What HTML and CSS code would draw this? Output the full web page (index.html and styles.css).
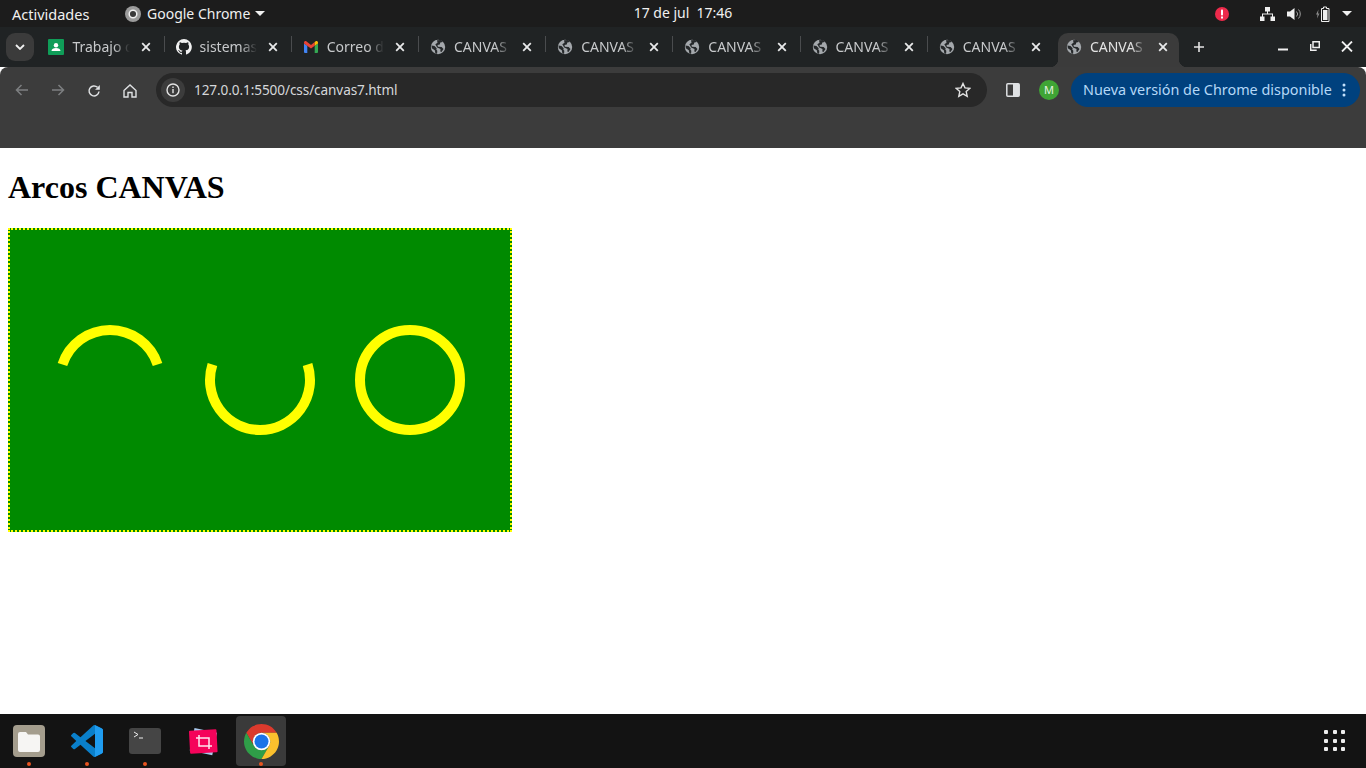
FILE: index.html
```html
<!DOCTYPE html>
<html lang="es">
<head>
    <meta charset="UTF-8">
    <title>Arcos CANVAS</title>
    <link rel="stylesheet" href="styles.css">
</head>
<body>
    <svg class="defs" width="0" height="0">
        <symbol id="globe" viewBox="0 0 16 16">
            <circle cx="8" cy="8" r="7.200" fill="#a4a8ac"/>
            <path d="M1.500 6.500l3 .5 2.200 2.200-.4 1.300 1 1.200-.2 3-1.700-.3-.6-3.200-3-2zM7 1.200l4-.1 1.800 1.900-2.500.6-.5 1.800-2.300.7.400 1.600 3.700.3 1.900 1.900-2 3-1.200-.3.200-2.700-3.300-1.500-1.900-3.200 2.200-1.500z" fill="#26292b"/>
        </symbol>
        <symbol id="close" viewBox="0 0 10 10">
            <path d="M1.200 1.200l7.600 7.600M8.800 1.200l-7.600 7.600" stroke="#e8e9ea" stroke-width="1.800" fill="none"/>
        </symbol>
    </svg>

    <!-- barra de gnome -->
    <header class="topbar">
        <div class="topbar-left">
            <span class="activities">Actividades</span>
            <span class="app-menu">
                <svg class="app-icon" width="16" height="16" viewBox="0 0 16 16"><circle cx="8" cy="8" r="8" fill="#9b9b9b"/><circle cx="8" cy="8" r="3.800" fill="#3a3a3a" stroke="#f0f0f0" stroke-width="1.500"/></svg>
                Google Chrome
                <svg class="caret" width="10" height="5" viewBox="0 0 10 5"><path d="M0 0h10L5 5z" fill="#f0f0f0"/></svg>
            </span>
        </div>
        <div class="clock">17 de jul&nbsp; 17:46</div>
        <div class="topbar-right">
            <svg class="alert" width="14" height="14" viewBox="0 0 14 14"><circle cx="7" cy="7" r="7" fill="#ed2a4b"/><rect x="6" y="2.500" width="2" height="6" rx=".8" fill="#fff"/><rect x="6" y="9.500" width="2" height="2" fill="#fff"/></svg>
            <svg class="net" width="15" height="14" viewBox="0 0 15 14"><path d="M5 0h5v4.500H8V6.500h5V9.500h2V14h-4.500V9.500h1.500V7.500H3V9.500h1.500V14H0V9.500h2V6.500h5V4.500H5z" fill="#f0f0f0"/></svg>
            <svg class="vol" width="15" height="14" viewBox="0 0 15 14"><path d="M0 4.500h3L7.500 1v12L3 9.500H0z" fill="#f0f0f0"/><path d="M9.500 4.500a3.500 3.500 0 0 1 0 5M11.500 2.500a6.500 6.500 0 0 1 0 9" stroke="#9c9c9c" fill="none"/></svg>
            <svg class="batt" width="15" height="16" viewBox="0 0 15 16"><path d="M2.500 3.500L0 8.500h1.500L1 12.500 3.500 7.500H2z" fill="#8c8c8c"/><path d="M7.500 2.500v-1.500h3v1.500h2.500v13H5.500v-13z" fill="none" stroke="#f0f0f0"/><rect x="7" y="4" width="4.500" height="10" fill="#f0f0f0"/></svg>
            <svg class="caret" width="10" height="5" viewBox="0 0 10 5"><path d="M0 0h10L5 5z" fill="#f0f0f0"/></svg>
        </div>
    </header>

    <!-- pestañas -->
    <div class="tabstrip">
        <button class="tab-search"><svg width="10" height="6" viewBox="0 0 10 6"><path d="M1 1l4 4 4-4" stroke="#f0f0f0" stroke-width="1.800" fill="none"/></svg></button>
        <div class="tabs">
            <div class="tab">
                <svg class="favicon" viewBox="0 0 16 16"><rect width="16" height="16" rx="1" fill="#0f9d58"/><circle cx="8" cy="6.300" r="2.200" fill="#fff"/><path d="M3.500 12c0-2 2-3 4.500-3s4.500 1 4.500 3z" fill="#fff"/></svg>
                <span class="tab-title">Trabajo d</span>
                <svg class="tab-close"><use href="#close"/></svg>
            </div>
            <div class="tab">
                <svg class="favicon" viewBox="0 0 16 16"><path d="M8 0a8 8 0 0 0-2.500 15.600c.4.100.5-.2.500-.4v-1.400c-2.200.5-2.700-1-2.700-1-.4-.9-.9-1.200-.9-1.200-.7-.5.100-.5.100-.5.800.1 1.200.8 1.200.8.700 1.200 1.900.9 2.300.7.100-.5.300-.9.500-1.100-1.800-.2-3.600-.9-3.600-4 0-.9.300-1.600.8-2.100-.1-.2-.4-1 .1-2.100 0 0 .7-.2 2.200.8a7.600 7.600 0 0 1 4 0c1.500-1 2.200-.8 2.200-.8.400 1.100.2 1.900.1 2.100.5.600.8 1.300.8 2.100 0 3.100-1.900 3.700-3.600 3.900.3.200.5.700.5 1.500v2.200c0 .2.100.5.600.4A8 8 0 0 0 8 0z" fill="#f1f1f1"/></svg>
                <span class="tab-title">sistemas</span>
                <svg class="tab-close"><use href="#close"/></svg>
            </div>
            <div class="tab">
                <svg class="favicon gmail" viewBox="0 0 14 12">
                    <path d="M0 2.500V11a1 1 0 0 0 1 1h2.300V4.800z" fill="#4285f4"/>
                    <path d="M14 2.500V11a1 1 0 0 1-1 1h-2.300V4.800z" fill="#34a853"/>
                    <path d="M0 1.500C0 .3 1.400-.4 2.300.3L7 3.900 10.700 1v3.800L7 7.600 0 2.500z" fill="#ea4335"/>
                    <path d="M10.700 1l1-.7c.9-.7 2.300 0 2.300 1.200v1l-3.300 2.300z" fill="#fbbc04"/>
                </svg>
                <span class="tab-title">Correo d</span>
                <svg class="tab-close"><use href="#close"/></svg>
            </div>
            <div class="tab">
                <svg class="favicon"><use href="#globe"/></svg>
                <span class="tab-title">CANVAS</span>
                <svg class="tab-close"><use href="#close"/></svg>
            </div>
            <div class="tab">
                <svg class="favicon"><use href="#globe"/></svg>
                <span class="tab-title">CANVAS</span>
                <svg class="tab-close"><use href="#close"/></svg>
            </div>
            <div class="tab">
                <svg class="favicon"><use href="#globe"/></svg>
                <span class="tab-title">CANVAS</span>
                <svg class="tab-close"><use href="#close"/></svg>
            </div>
            <div class="tab">
                <svg class="favicon"><use href="#globe"/></svg>
                <span class="tab-title">CANVAS</span>
                <svg class="tab-close"><use href="#close"/></svg>
            </div>
            <div class="tab no-sep">
                <svg class="favicon"><use href="#globe"/></svg>
                <span class="tab-title">CANVAS</span>
                <svg class="tab-close"><use href="#close"/></svg>
            </div>
            <div class="tab active">
                <svg class="favicon"><use href="#globe"/></svg>
                <span class="tab-title">CANVAS</span>
                <svg class="tab-close"><use href="#close"/></svg>
            </div>
        </div>
        <svg class="new-tab" width="12" height="12" viewBox="0 0 12 12"><path d="M6 1v10M1 6h10" stroke="#e3e3e3" stroke-width="1.600"/></svg>
        <div class="window-controls">
            <svg class="win-min" width="10" height="10" viewBox="0 0 10 10"><rect y="7.500" width="10" height="2" fill="#f0f0f0"/></svg>
            <svg width="10" height="10" viewBox="0 0 10 10"><path d="M3 .7h6.300V6.500H3zM.7 3v6.300h6" fill="none" stroke="#f0f0f0" stroke-width="1.500"/></svg>
            <svg width="12" height="11" viewBox="0 0 12 11"><path d="M1 .5l10 10M11 .5L1 10.500" stroke="#f0f0f0" stroke-width="1.800"/></svg>
        </div>
    </div>

    <!-- barra de herramientas -->
    <div class="toolbar">
        <svg class="nav-icon" width="14" height="12" viewBox="0 0 14 12"><path d="M13 6H2M6.500 1L1.500 6l5 5" stroke="#7d7f81" stroke-width="1.500" fill="none"/></svg>
        <svg class="nav-icon" width="14" height="12" viewBox="0 0 14 12"><path d="M1 6h11M7.500 1l5 5-5 5" stroke="#7d7f81" stroke-width="1.500" fill="none"/></svg>
        <svg class="nav-icon" width="14" height="14" viewBox="0 0 14 14"><path d="M12 7.500A5 5 0 1 1 10.500 3.300" stroke="#dfe1e3" stroke-width="1.500" fill="none"/><path d="M12.800 1v4.700H8.100z" fill="#dfe1e3"/></svg>
        <svg class="nav-icon" width="14" height="14" viewBox="0 0 14 14"><path d="M1 6.500L7 1l6 5.500V13H9V8.500H5V13H1z" stroke="#dfe1e3" stroke-width="1.400" fill="none"/></svg>
        <div class="omnibox">
            <span class="site-info"><svg width="14" height="14" viewBox="0 0 14 14"><circle cx="7" cy="7" r="6" stroke="#e3e3e3" stroke-width="1.400" fill="none"/><rect x="6.300" y="6" width="1.400" height="4.200" fill="#e3e3e3"/><rect x="6.300" y="3.500" width="1.400" height="1.500" fill="#e3e3e3"/></svg></span>
            <span class="url">127.0.0.1:5500/css/canvas7.html</span>
            <svg class="star" width="16" height="16" viewBox="0 0 16 16"><path d="M8 1.500l2 4.400 4.700.5-3.500 3.200 1 4.700L8 11.900 3.800 14.300l1-4.700L1.300 6.400 6 5.900z" stroke="#e3e3e3" stroke-width="1.400" fill="none"/></svg>
        </div>
        <svg class="side-panel" width="14" height="14" viewBox="0 0 14 14"><rect x=".8" y=".8" width="12.400" height="12.400" rx="1" fill="none" stroke="#dfe1e3" stroke-width="1.500"/><rect x="7" y="1" width="6" height="12" fill="#dfe1e3"/></svg>
        <span class="avatar">M</span>
        <div class="update-pill">
            <span class="update-text">Nueva versión de Chrome disponible</span>
            <svg width="4" height="14" viewBox="0 0 4 14"><circle cx="2" cy="2" r="1.500" fill="#c2e0fb"/><circle cx="2" cy="7" r="1.500" fill="#c2e0fb"/><circle cx="2" cy="12" r="1.500" fill="#c2e0fb"/></svg>
        </div>
    </div>

    <!-- pagina -->
    <main class="page">
        <h1>Arcos CANVAS</h1>
        <svg class="lienzo" width="500" height="300" viewBox="0 0 500 300">
            <path class="arco" d="M52.450 134.550A50 50 0 0 1 147.550 134.550"/>
            <path class="arco" d="M202.450 134.550A50 50 0 1 0 297.550 134.550"/>
            <circle class="arco" cx="400" cy="150" r="50"/>
        </svg>
    </main>

    <!-- dock -->
    <footer class="dock">
        <div class="dock-item">
            <svg width="32" height="32" viewBox="0 0 32 32"><rect width="32" height="32" rx="4" fill="#a49d8d"/><path d="M5 9a2 2 0 0 1 2-2h6l2 2.500h10a2 2 0 0 1 2 2V25a2 2 0 0 1-2 2H7a2 2 0 0 1-2-2z" fill="#f6f5f3"/></svg>
            <span class="running"></span>
        </div>
        <div class="dock-item">
            <svg width="32" height="32" viewBox="0 0 100 100"><path d="M96.500 10.800L75.900.9a6.200 6.200 0 0 0-7.100 1.200L29.500 37.900 12.500 24.900a4.100 4.100 0 0 0-5.300.2l-5.500 5.100a4.100 4.100 0 0 0 0 6.100L16.500 50 1.700 63.700a4.100 4.100 0 0 0 0 6.100l5.500 5a4.100 4.100 0 0 0 5.300.3l17-13 39.300 35.800a6.200 6.200 0 0 0 7.100 1.200l20.600-9.900a6.200 6.200 0 0 0 3.500-5.600V16.400a6.200 6.200 0 0 0-3.500-5.600zM75 72.700L45.200 50 75 27.300z" fill="#0a7fca"/><path d="M75 0.500a6.200 6.200 0 0 1 .9.400l20.600 9.900a6.200 6.200 0 0 1 3.500 5.600v67.200a6.200 6.200 0 0 1-3.500 5.600l-20.600 9.900a6.200 6.200 0 0 1-.9.400z" fill="#1f9cf0"/></svg>
            <span class="running"></span>
        </div>
        <div class="dock-item">
            <svg width="32" height="26" viewBox="0 0 32 26"><rect width="32" height="26" rx="3" fill="#454545"/><path d="M5 4l4 2.500L5 9" stroke="#eee" fill="none"/><rect x="10" y="9.500" width="4" height="1" fill="#eee"/></svg>
            <span class="running"></span>
        </div>
        <div class="dock-item">
            <svg width="32" height="32" viewBox="0 0 32 32"><rect x="5" y="5" width="23" height="23" fill="#a9c8ec" transform="rotate(12 16 16)"/><rect x="2.500" y="5" width="27.500" height="23" rx="1" fill="#f5035a" transform="rotate(-3 16 16)"/><path d="M9 13h13v11M12 10v11h13" stroke="#fff" stroke-width="1.500" fill="none" opacity=".9"/></svg>
        </div>
        <div class="dock-item current">
            <svg width="35" height="35" viewBox="4 4 40 40">
                <path d="M6.680 14A20 20 0 0 1 41.320 14H24A10 10 0 0 0 15.340 29z" fill="#db3a2d"/>
                <path d="M6.680 14L15.340 29A10 10 0 0 0 32.660 29L24 44A20 20 0 0 1 6.680 14z" fill="#2f9e48"/>
                <path d="M41.320 14H24A10 10 0 0 1 32.660 29L24 44A20 20 0 0 0 41.320 14z" fill="#fbc02d"/>
                <circle cx="24" cy="24" r="10" fill="#fff"/>
                <circle cx="24" cy="24" r="8" fill="#1a73e8"/>
            </svg>
            <span class="running"></span>
        </div>
        <div class="apps-grid">
            <i></i><i></i><i></i><i></i><i></i><i></i><i></i><i></i><i></i>
        </div>
    </footer>
</body>
</html>
```

FILE: styles.css
```css
* {
    box-sizing: border-box;
}
body {
    margin: 0;
    height: 768px;
    overflow: hidden;
    display: flex;
    flex-direction: column;
    font-family: "Noto Sans", sans-serif;
    background: white;
}
.defs {
    position: absolute;
}

/* barra de gnome */
.topbar {
    height: 27px;
    flex: none;
    display: grid;
    grid-template-columns: 1fr auto 1fr;
    align-items: center;
    background-color: #1c1c1c;
    color: #f0f0f0;
    font-size: 14px;
}
.topbar-left {
    display: flex;
    align-items: center;
    padding-left: 12px;
}
.activities {
    width: 113px;
    font-size: 14.5px;
}
.app-menu {
    display: flex;
    align-items: center;
}
.app-icon {
    margin-right: 6px;
}
.app-menu .caret {
    margin-left: 5px;
}
.clock {
    margin-bottom: 2px;
    font-size: 14px;
}
.topbar-right {
    display: flex;
    align-items: center;
    justify-content: flex-end;
    padding-right: 14px;
}
.net {
    margin-left: 31px;
}
.vol {
    margin-left: 12px;
}
.batt {
    margin-left: 14px;
}
.topbar-right .caret {
    margin-left: 11px;
}

/* pestañas */
.tabstrip {
    position: relative;
    z-index: 0;
    height: 40px;
    flex: none;
    display: flex;
    align-items: flex-start;
    padding-top: 6px;
    background-color: #202324;
}
.tab-search {
    width: 28px;
    height: 28px;
    margin-left: 6px;
    padding: 0;
    border: none;
    border-radius: 9px;
    background-color: #3b3b3b;
    display: flex;
    align-items: center;
    justify-content: center;
}
.tabs {
    display: flex;
    gap: 6px;
    margin-left: 6.4px;
}
.tab {
    position: relative;
    width: 121.2px;
    height: 34px;
    padding: 0 11px 6px 8px;
    display: flex;
    align-items: center;
    color: #c7c9cb;
    font-size: 14px;
}
.tab::after {
    content: "";
    position: absolute;
    right: -3px;
    top: 3px;
    width: 1px;
    height: 16px;
    background-color: #4a4c4e;
}
.tab.no-sep::after,
.tab.active::after {
    display: none;
}
.tab.active {
    background-color: #3b3b3b;
    border-radius: 10px 10px 0 0;
    color: #e3e3e3;
}
.tab.active::before {
    content: "";
    position: absolute;
    left: -8px;
    right: -8px;
    bottom: 0;
    height: 8px;
    z-index: -1;
    background:
        radial-gradient(circle at 0 0, #202324 8px, #3b3b3b 8.5px) left / 8px 8px no-repeat,
        radial-gradient(circle at 100% 0, #202324 8px, #3b3b3b 8.5px) right / 8px 8px no-repeat;
}
.favicon {
    width: 16px;
    height: 16px;
    flex: none;
}
.gmail {
    width: 14px;
    height: 12px;
    margin: 0 1px;
}
.tab-title {
    flex: 1;
    min-width: 0;
    margin: 0 0 2px 8px;
    white-space: nowrap;
    overflow: hidden;
    -webkit-mask-image: linear-gradient(to right, black 66%, transparent 92%);
    mask-image: linear-gradient(to right, black 66%, transparent 92%);
}
.tab-close {
    width: 10px;
    height: 10px;
    flex: none;
    margin-left: 6px;
}
.new-tab {
    margin: 8px 0 0 14px;
}
.window-controls {
    margin-left: auto;
    padding: 8px 13px 0 0;
    display: flex;
    gap: 21px;
}
.window-controls svg {
    display: block;
}
.win-min {
    margin-right: 1px;
}

/* barra de herramientas */
.toolbar {
    height: 81px;
    flex: none;
    display: flex;
    align-items: flex-start;
    padding: 6px 6px 0 0;
    background-color: #3c3c3c;
    border-radius: 8px 8px 0 0;
}
.nav-icon {
    margin: 11px 0 0 15px;
    flex: none;
}
.nav-icon + .nav-icon {
    margin-left: 22px;
}
.omnibox {
    width: 831px;
    height: 34px;
    margin-left: 19px;
    padding: 0 16px 0 5px;
    display: flex;
    align-items: center;
    background-color: #282828;
    border-radius: 17px;
}
.site-info {
    width: 24px;
    height: 24px;
    border-radius: 50%;
    background-color: #3c3c3c;
    display: flex;
    align-items: center;
    justify-content: center;
}
.url {
    margin: 0 0 2px 9px;
    color: #d5d7da;
    font-size: 13.6px;
    letter-spacing: -0.1px;
}
.star {
    margin-left: auto;
}
.side-panel {
    margin: 10px 0 0 19px;
}
.avatar {
    width: 20px;
    height: 20px;
    margin: 7px 0 0 19px;
    border-radius: 50%;
    background-color: #3fa535;
    color: #e6f4e2;
    font-size: 11px;
    text-align: center;
    line-height: 20px;
}
.update-pill {
    flex: 1;
    height: 34px;
    margin-left: 12px;
    padding: 0 14px 0 12px;
    display: flex;
    align-items: center;
    justify-content: space-between;
    background-color: #00417e;
    border-radius: 17px;
    color: #b5d8f7;
    font-size: 14.4px;
}
.update-text {
    margin-bottom: 2px;
}

/* pagina */
.page {
    flex: 1;
    padding: 0 8px;
    background-color: white;
    overflow: hidden;
}
h1 {
    margin: 21.44px 0;
    font-family: "Liberation Serif", serif;
    font-size: 32px;
    font-weight: bold;
    color: black;
}
.lienzo {
    display: block;
    width: 504px;
    height: 304px;
    border: 2px dotted yellow;
    background-color: #008a00;
}
.arco {
    fill: none;
    stroke: #ffff00;
    stroke-width: 10;
}

/* dock */
.dock {
    height: 54px;
    flex: none;
    display: flex;
    align-items: flex-start;
    gap: 8px;
    padding: 2px 21px 0 4px;
    background-color: #131313;
}
.dock-item {
    position: relative;
    width: 50px;
    height: 50px;
    display: flex;
    align-items: center;
    justify-content: center;
    border-radius: 4px;
}
.dock-item.current {
    background-color: #3a3a3a;
}
.running {
    position: absolute;
    left: 23px;
    bottom: 0;
    width: 4px;
    height: 4px;
    border-radius: 50%;
    background-color: #e95420;
}
.apps-grid {
    margin: 14px 0 0 auto;
    display: grid;
    grid-template-columns: repeat(3, 4px);
    grid-auto-rows: 4px;
    gap: 4.500px;
}
.apps-grid i {
    background-color: #eeeeee;
    border-radius: 1px;
}
```
